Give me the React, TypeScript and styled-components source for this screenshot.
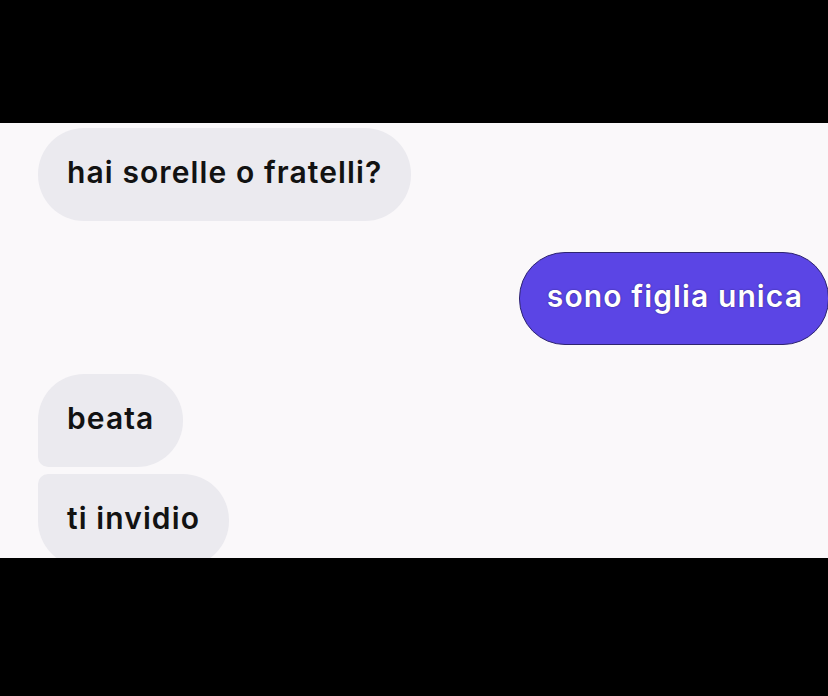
import React from "react";
import styled, { createGlobalStyle } from "styled-components";

const Global = createGlobalStyle`
  html, body { margin: 0; padding: 0; background: #000; }
  body { width: 828px; height: 696px; overflow: hidden; font-family: Inter, "Noto Sans", sans-serif; }
`;

const Page = styled.div`
  width: 828px;
  height: 696px;
  display: flex;
  flex-direction: column;
  background: #000;
`;

const Band = styled.div<{ $h: number }>`
  height: ${(p) => p.$h}px;
  flex: none;
  background: #000;
`;

const Chat = styled.div`
  height: 435px;
  flex: none;
  overflow: hidden;
  background: #faf8fa;
  display: flex;
  flex-direction: column;
  padding: 5px 0 0 38px;
  box-sizing: border-box;
`;

const Row = styled.div<{ $mine?: boolean; $gap: number }>`
  display: flex;
  justify-content: ${(p) => (p.$mine ? "flex-end" : "flex-start")};
  margin-top: ${(p) => p.$gap}px;
  margin-right: ${(p) => (p.$mine ? "-1px" : "0")};
`;

const Bubble = styled.div<{ $mine?: boolean; $corners?: string }>`
  height: 93px;
  box-sizing: border-box;
  display: flex;
  align-items: center;
  padding: ${(p) => (p.$mine ? "0 25px 6px 27px" : "0 29px 6px 29px")};
  border-radius: ${(p) => p.$corners ?? "46px"};
  font-size: 30px;
  font-weight: 600;
  letter-spacing: 1.1px;
  white-space: nowrap;
  color: ${(p) => (p.$mine ? "#fff" : "#121212")};
  background: ${(p) => (p.$mine ? "#5b45e5" : "#ebeaef")};
  border: ${(p) => (p.$mine ? "1.5px solid #2f2570" : "none")};
  text-shadow: ${(p) => (p.$mine ? "0 0 1.5px rgba(30,20,80,0.85)" : "none")};
`;

export default function App() {
  return (
    <Page>
      <Global />
      <Band $h={123} />
      <Chat>
        <Row $gap={0}>
          <Bubble>hai sorelle o fratelli?</Bubble>
        </Row>
        <Row $mine $gap={31}>
          <Bubble $mine>sono figlia unica</Bubble>
        </Row>
        <Row $gap={29}>
          <Bubble $corners="46px 46px 46px 10px">beata</Bubble>
        </Row>
        <Row $gap={7}>
          <Bubble $corners="10px 46px 46px 46px">ti invidio</Bubble>
        </Row>
      </Chat>
      <Band $h={138} />
    </Page>
  );
}
